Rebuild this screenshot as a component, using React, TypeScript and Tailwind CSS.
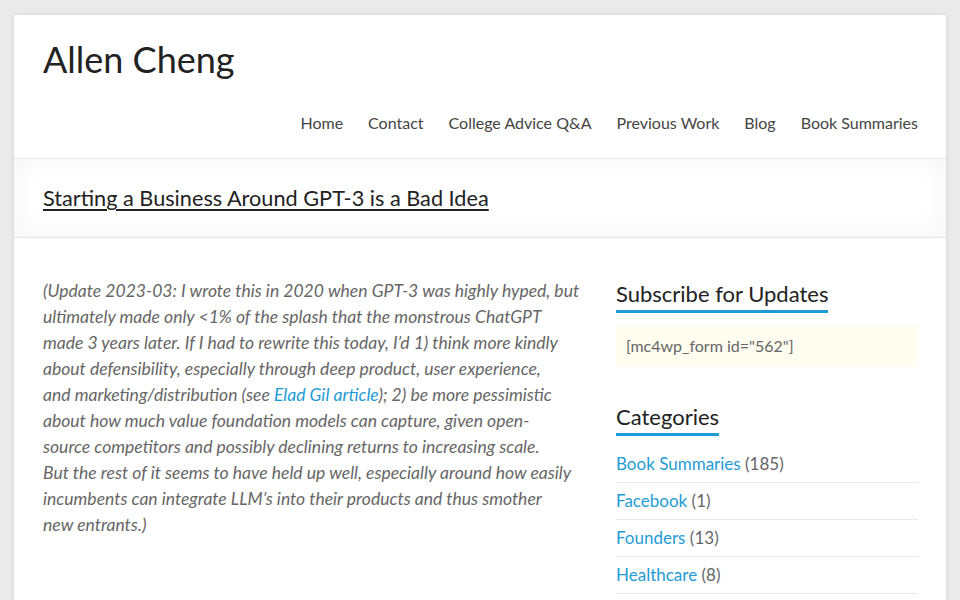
import React from "react";

const nav = ["Home", "Contact", "College Advice Q&A", "Previous Work", "Blog", "Book Summaries"];

const categories: [string, number][] = [
  ["Book Summaries", 185],
  ["Facebook", 1],
  ["Founders", 13],
  ["Healthcare", 8],
];

function WidgetTitle({ children }: { children: React.ReactNode }) {
  return (
    <h3 className="mb-[12px]">
      <span className="inline-block border-b-[3px] border-[#1e9bd6] pb-[1px] text-[22px] leading-[30px] text-[#222]">
        {children}
      </span>
    </h3>
  );
}

export default function App() {
  return (
    <div
      className="h-[600px] w-[960px] overflow-hidden bg-[#eaeaea] pt-[15px] pl-[14px]"
      style={{ fontFamily: "Lato, 'Open Sans', sans-serif" }}
    >
      <div className="h-[700px] w-[932px] bg-white shadow-[0_0_4px_rgba(0,0,0,0.12)]">
        {/* site header */}
        <header className="border-b border-[#eaeaea] pl-[29px] pr-[28px]">
          <div className="pt-[22px] text-[36px] leading-[44px] text-[#222]">Allen Cheng</div>
          <nav className="mt-[32px] flex justify-end gap-[25px] pb-[25px] text-[16px] leading-[20px] text-[#444]">
            {nav.map((n) => (
              <span key={n}>{n}</span>
            ))}
          </nav>
        </header>

        {/* page title bar */}
        <div className="h-[79px] border-b border-[#e4e4e4] bg-white px-[29px] shadow-[inset_0_0_30px_rgba(0,0,0,0.045)]">
          <h1 className="pt-[24px] text-[21.7px] leading-[30px] text-[#222] underline decoration-[2px] underline-offset-[3px]">
            Starting a Business Around GPT-3 is a Bad Idea
          </h1>
        </div>

        {/* main content */}
        <div className="flex pl-[29px] pr-[28px] pt-[40px]">
          <div className="w-[545px]">
            <p className="whitespace-nowrap text-[17.55px] italic leading-[26px] text-[#666]">
              (Update 2023-03: I wrote this in 2020 when GPT-3 was highly hyped, but
              <br />
              ultimately made only &lt;1% of the splash that the monstrous ChatGPT
              <br />
              made 3 years later. If I had to rewrite this today, I’d 1) think more kindly
              <br />
              about defensibility, especially through deep product, user experience,
              <br />
              and marketing/distribution (see <span className="text-[#1e9bd6]">Elad Gil article</span>); 2) be more
              pessimistic
              <br />
              about how much value foundation models can capture, given open-
              <br />
              source competitors and possibly declining returns to increasing scale.
              <br />
              But the rest of it seems to have held up well, especially around how easily
              <br />
              incumbents can integrate LLM’s into their products and thus smother
              <br />
              new entrants.)
            </p>
          </div>
          <aside className="ml-auto w-[302px] pt-[1px]">
            <WidgetTitle>Subscribe for Updates</WidgetTitle>
            <div className="bg-[#fffcf0] px-[10px] py-[10px] text-[16px] leading-[22px] text-[#666]">
              [mc4wp_form id="562"]
            </div>
            <div className="mt-[35px]">
              <WidgetTitle>Categories</WidgetTitle>
              <ul className="-mt-[2px]">
                {categories.map(([name, count]) => (
                  <li
                    key={name}
                    className="border-b border-[#eaeaea] py-[6px] text-[17px] leading-[24px] text-[#666]"
                  >
                    <span className="text-[#1e9bd6]">{name}</span> ({count})
                  </li>
                ))}
              </ul>
            </div>
          </aside>
        </div>
      </div>
    </div>
  );
}
